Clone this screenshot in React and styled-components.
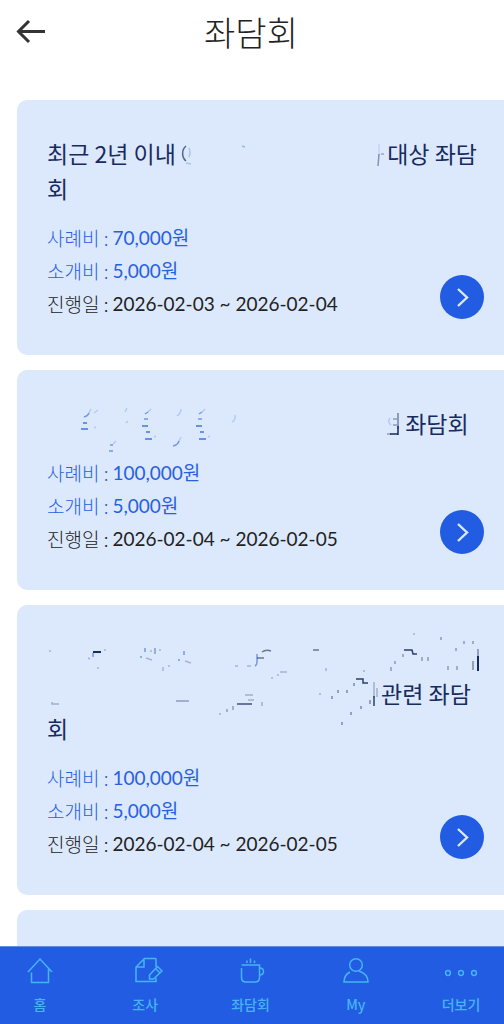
import styled, { createGlobalStyle } from "styled-components";

const GlobalStyle = createGlobalStyle`
    * {
        box-sizing: border-box;
    }
    body {
        margin: 0;
        background: #fff;
        font-family: "Noto Sans CJK KR", sans-serif;
    }
    h1, h2, dl, dd {
        margin: 0;
    }
`

const Screen = styled.div`
    display: flex;
    flex-direction: column;
    height: 100vh;
    overflow: hidden;
`

const Header = styled.header`
    display: grid;
    grid-template-columns: 48px 1fr 48px;
    align-items: center;
    flex: none;
    height: 64px;
    padding-right: 2px;
    h1 {
        text-align: center;
        font-size: 34px;
        line-height: 48px;
        font-weight: 300;
        color: #222;
    }
`

const BackButton = styled.button`
    display: flex;
    justify-content: flex-end;
    border: 0;
    padding: 0;
    background: none;
    color: #333;
    cursor: pointer;
`

const List = styled.main`
    display: flex;
    flex-direction: column;
    gap: 15px;
    flex: 1;
    min-height: 0;
    padding: 36px 0 0 17px;
    overflow-y: auto;
    scrollbar-width: none;
`

const Card = styled.article`
    flex: none;
    min-height: 220px;
    padding: 36px 20px 35px 30px;
    border-radius: 10px 0 0 10px;
    background: #dce9fd;
`

const CardTitle = styled.h2`
    margin-bottom: 15px;
    font-size: 23px;
    line-height: 35px;
    font-weight: 400;
    color: #182b60;
    word-break: break-all;
`

const Smudge = styled.svg`
    display: inline-block;
    width: ${({ $width }) => $width}px;
    height: 35px;
    vertical-align: top;
    overflow: visible;
    fill: none;
    stroke-width: 1.5;
    filter: blur(0.5px);
`

const CardBody = styled.div`
    display: flex;
    justify-content: space-between;
    align-items: flex-end;
`

const Row = styled.div`
    display: flex;
    gap: 4px;
    font-size: 19px;
    line-height: 33px;
    color: ${({ $dark }) => ($dark ? "#222" : "#2860e0")};
    dt {
        font-weight: 300;
    }
    dd {
        font-family: Lato, "Noto Sans CJK KR", sans-serif;
    }
`

const GoButton = styled.button`
    display: flex;
    align-items: center;
    justify-content: center;
    width: 44px;
    height: 44px;
    margin-bottom: 1px;
    border: 0;
    border-radius: 50%;
    padding: 0;
    background: #225ce2;
    color: #dce9fd;
    cursor: pointer;
`

const TabBar = styled.nav`
    display: flex;
    justify-content: space-between;
    flex: none;
    height: 78px;
    padding: 10px 11px 0 8px;
    border-top: 1px solid #5f8fdc;
    background: #225ce2;
`

const Tab = styled.a`
    display: flex;
    flex-direction: column;
    align-items: center;
    gap: 7px;
    width: 64px;
    font-size: 14px;
    line-height: 20px;
    font-weight: 500;
    color: #45b4f5;
    text-decoration: none;
    svg {
        fill: none;
        stroke: currentColor;
        stroke-width: 1.5;
    }
`

const NAVY = "#182b60";
const BLUE = "#3a6fd8";

const FirstTitle = () => (
    <>
        {"최근 2년 이내 "}
        <Smudge $width={201} viewBox="0 0 201 35" aria-hidden="true">
            <path d="M5 10C0 14 1 22 5 25" stroke={NAVY} opacity="0.7" />
            <path d="M8 12q2 4 0 9M5 27l5 1" stroke={BLUE} opacity="0.3" />
            <path d="M61 10l3 1" stroke={BLUE} opacity="0.4" />
            <path d="M198 8v11" stroke={NAVY} opacity="0.1" />
            <path d="M198 18l-1 12" stroke={NAVY} opacity="0.45" />
            <path d="M200 18h3" stroke={NAVY} opacity="0.35" />
        </Smudge>
        {" 대상 좌담회"}
    </>
)

const SecondTitle = () => (
    <>
        <Smudge $width={353} viewBox="0 0 353 35" aria-hidden="true">
            <g stroke={BLUE}>
                <path d="M36 17h4M34 23h7M95 20h6M99 26h4M98 33h7M149 20h6M153 26h4M152 33h7" opacity="0.95" />
                <path d="M37 11q4-1 5-4M97 13h4M151 13h4M126 40q5-1 6-5M98 8l3-2M152 8l3-2M63 39h3M62 45h4" opacity="0.65" />
                <path d="M42 7l2-4M47 7l4-3M78 6l2-4M79 17l2-2M47 22l2-1M132 35l2-4M130 10q4-3 4-7M185 16q4-2 3-7M107 31l2-1M161 31l2-1M66 38l3-3M101 6l3-3M155 6l3-3" opacity="0.25" />
                <path d="M343 12q-3 4 1 7" opacity="0.25" />
            </g>
            <path d="M351 7v16" stroke={NAVY} opacity="0.55" />
            <path d="M351 20v9M343 28h8" stroke={NAVY} />
            <path d="M340 28h4M346 13h4M346 19h4" stroke={NAVY} opacity="0.4" />
        </Smudge>
        {" 좌담회"}
    </>
)

const ThirdTitle = () => (
    <>
        <Smudge $width={433} viewBox="0 0 433 35" aria-hidden="true">
            <path d="M46 11h8" stroke={NAVY} strokeWidth="2" />
            <g stroke={BLUE} opacity="0.65">
                <path d="M46 12v4M98 7v4M94 15v2M137 10v4M132 18v2M210 13v8q0 3-2 4" />
            </g>
            <g stroke={NAVY} opacity="0.28">
                <path d="M2 10h2M41 17l2 1M57 9h2M50 27h2M99 17l6 2M104 9v2M113 8v2M138 20l6 2M116 26v4M121 25h2M188 25h3M200 25h4" />
                <path d="M225 36v2M231 33v2M233 31h7M279 27v3M366 -7h2" />
            </g>
            <g stroke={NAVY} opacity="0.42">
                <path d="M108 7v6M394 -4v3M417 0v3M426 0v3M409 7v3M375 16v4M381 16v4M401 25v4M410 25v4M356 13v3M348 20v3M344 26v4" />
            </g>
            <path d="M210 17h7M215 11q4-3 9-1M266 9h6" stroke={NAVY} opacity="0.6" />
            <path d="M357 9h8l1 4h4" stroke={NAVY} opacity="0.9" />
            <path d="M431 8v10M426 20v9" stroke={NAVY} opacity="0.5" />
            <path d="M431 15v15" stroke={NAVY} strokeWidth="2" />
        </Smudge>
        <Smudge $width={334} viewBox="0 0 334 35" aria-hidden="true">
            <g stroke={NAVY} opacity="0.3">
                <path d="M5 26v2h7M173 37v2M198 19h8M201 24h6M215 26v4M273 17v2M317 -6v2M330 12v9M327 6v16" />
            </g>
            <path d="M129 25h13M180 33v3M186 30v4" stroke={NAVY} opacity="0.4" />
            <path d="M190 28h15" stroke={NAVY} opacity="0.8" />
            <path d="M309 3h7v4h5" stroke={NAVY} opacity="0.9" />
            <g stroke={NAVY} opacity="0.5">
                <path d="M307 7v3M285 20v3M291 14v3M300 14v3M323 24v4M314 30v3M304 36v3M295 46v3" />
            </g>
            <path d="M327 20v10" stroke={NAVY} opacity="0.9" />
        </Smudge>
        {"관련 좌담회"}
    </>
)

const panels = [
    { id: 1, Title: FirstTitle, reward: "70,000원", referral: "5,000원", date: "2026-02-03 ~ 2026-02-04" },
    { id: 2, Title: SecondTitle, reward: "100,000원", referral: "5,000원", date: "2026-02-04 ~ 2026-02-05" },
    { id: 3, Title: ThirdTitle, reward: "100,000원", referral: "5,000원", date: "2026-02-04 ~ 2026-02-05" },
];

const tabs = [
    {
        label: "홈",
        icon: <path d="M2 15L14 2l12 13M5.500 15.500V25.500H22.500V11.500" />,
    },
    {
        label: "조사",
        icon: (
            <>
                <path d="M25 1.500H13.500L5 10V24.500H25V21M25 1.500V10M13 2V10H5" />
                <path d="M18.500 18l8-8.500 4.500 4.500-8.500 8h-4zM24.500 11.500l4.500 4.500" />
            </>
        ),
    },
    {
        label: "좌담회",
        icon: (
            <>
                <path d="M4.500 8H22.500V20.500q0 4.500-4.500 4.500H9q-4.500 0-4.500-4.500V11" />
                <path d="M22.500 11q4 0 4 3.500t-4 3.500M10 3.500v2.500M13.500 1.500v4.500M17.500 3.500v2.500" />
            </>
        ),
    },
    {
        label: "My",
        icon: (
            <>
                <circle cx="14" cy="8" r="6.300" />
                <path d="M8 15Q2 18 2 25H26Q26 17 17 14" />
            </>
        ),
    },
    {
        label: "더보기",
        icon: (
            <>
                <circle cx="1" cy="16" r="2.400" />
                <circle cx="14" cy="16" r="2.400" />
                <circle cx="27" cy="16" r="2.400" />
            </>
        ),
    },
];

const App = () => {
    const MapPanels = panels.map(({ id, Title, reward, referral, date }) => (
        <Card key={id}>
            <CardTitle><Title /></CardTitle>
            <CardBody>
                <dl>
                    <Row><dt>사례비 :</dt><dd>{reward}</dd></Row>
                    <Row><dt>소개비 :</dt><dd>{referral}</dd></Row>
                    <Row $dark><dt>진행일 :</dt><dd>{date}</dd></Row>
                </dl>
                <GoButton type="button">
                    <svg width="44" height="44" viewBox="0 0 44 44" fill="none" stroke="currentColor" strokeWidth="2.400" aria-hidden="true">
                        <path d="M18 14l9 8.500-9 8.500" />
                    </svg>
                </GoButton>
            </CardBody>
        </Card>
    ));

    const MapTabs = tabs.map((_) => (
        <Tab key={_.label} href="#">
            <svg width="28" height="30" viewBox="0 0 28 30" overflow="visible" aria-hidden="true">
                {_.icon}
            </svg>
            <span>{_.label}</span>
        </Tab>
    ));

    return (
        <Screen>
            <GlobalStyle />
            <Header>
                <BackButton type="button">
                    <svg width="32" height="28" viewBox="0 0 32 28" fill="none" stroke="currentColor" strokeWidth="3" aria-hidden="true">
                        <path d="M29 13.500H3M13 3L2.500 13.500 13 24" />
                    </svg>
                </BackButton>
                <h1>좌담회</h1>
            </Header>
            <List>
                {MapPanels}
                <Card />
            </List>
            <TabBar>{MapTabs}</TabBar>
        </Screen>
    )
}

export default App
